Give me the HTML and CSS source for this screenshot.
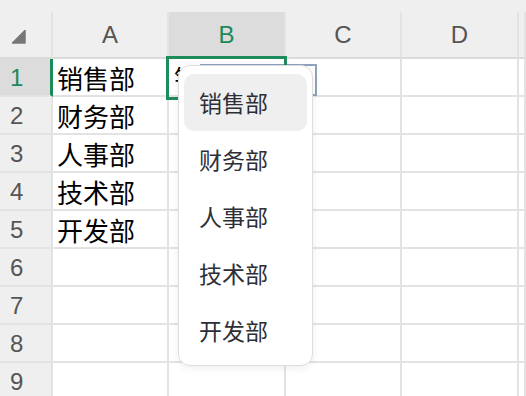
FILE: index.html
```html
<!DOCTYPE html>
<html lang="zh-CN">
<head>
  <meta charset="UTF-8">
  <title>Sheet</title>
  <link rel="stylesheet" href="styles.css">
</head>
<body>
  <div class="sheet">
    <div class="top-band"></div>

    <div class="row head">
      <div class="corner">
        <svg width="16" height="16" viewBox="0 0 16 16"><path d="M14 1.5 L14 14 L1.5 14 Z" fill="#777" stroke="#777" stroke-width="1.5" stroke-linejoin="round"/></svg>
      </div>
      <div class="col a">A</div>
      <div class="col b active">B</div>
      <div class="col c">C</div>
      <div class="col d">D</div>
      <div class="col e"></div>
    </div>

    <div class="row">
      <div class="rh active">1</div>
      <div class="cell a">销售部</div>
      <div class="cell b">销售部</div>
      <div class="cell c"></div>
      <div class="cell d"></div>
      <div class="cell e"></div>
    </div>
    <div class="row">
      <div class="rh">2</div>
      <div class="cell a">财务部</div>
      <div class="cell b"></div><div class="cell c"></div><div class="cell d"></div><div class="cell e"></div>
    </div>
    <div class="row">
      <div class="rh">3</div>
      <div class="cell a">人事部</div>
      <div class="cell b"></div><div class="cell c"></div><div class="cell d"></div><div class="cell e"></div>
    </div>
    <div class="row">
      <div class="rh">4</div>
      <div class="cell a">技术部</div>
      <div class="cell b"></div><div class="cell c"></div><div class="cell d"></div><div class="cell e"></div>
    </div>
    <div class="row">
      <div class="rh">5</div>
      <div class="cell a">开发部</div>
      <div class="cell b"></div><div class="cell c"></div><div class="cell d"></div><div class="cell e"></div>
    </div>
    <div class="row">
      <div class="rh">6</div>
      <div class="cell a"></div><div class="cell b"></div><div class="cell c"></div><div class="cell d"></div><div class="cell e"></div>
    </div>
    <div class="row">
      <div class="rh">7</div>
      <div class="cell a"></div><div class="cell b"></div><div class="cell c"></div><div class="cell d"></div><div class="cell e"></div>
    </div>
    <div class="row">
      <div class="rh">8</div>
      <div class="cell a"></div><div class="cell b"></div><div class="cell c"></div><div class="cell d"></div><div class="cell e"></div>
    </div>
    <div class="row">
      <div class="rh">9</div>
      <div class="cell a"></div><div class="cell b"></div><div class="cell c"></div><div class="cell d"></div><div class="cell e"></div>
    </div>

    <!-- editor + selection over B1 -->
    <div class="editor"></div>
    <div class="selection"></div>

    <div class="dropdown">
      <div class="option selected">销售部</div>
      <div class="option">财务部</div>
      <div class="option">人事部</div>
      <div class="option">技术部</div>
      <div class="option">开发部</div>
    </div>
  </div>
</body>
</html>
```

FILE: styles.css
```css
* {
  box-sizing: border-box;
}

html, body {
  margin: 0;
  height: 100%;
  overflow: hidden;
  background: #fff;
}

.sheet {
  position: relative;
  font-family: "Liberation Sans", Arial, sans-serif;
}

.top-band {
  height: 12px;
  background: #efefef;
}

.row {
  display: flex;
  height: 38px;
}

.row.head {
  height: 47px;
}

.row > div {
  border-right: 2px solid #e3e3e3;
  border-bottom: 2px solid #e3e3e3;
  flex-shrink: 0;
}

.corner, .rh {
  width: 53px;
  background: #efefef;
}

.a { width: 116px; }
.b { width: 117px; }
.c { width: 116px; }
.d { width: 117px; }
.e { flex: 1; }

.corner {
  display: flex;
  align-items: flex-end;
  padding: 0 0 12px 11px;
  border-bottom-color: #dadada !important;
}

.col {
  background: #efefef;
  color: #555;
  font-size: 24px;
  text-align: center;
  line-height: 45px;
  border-bottom-color: #dadada !important;
}

.col.active {
  background: #dcdcdc;
  color: #1b8a5a;
}

.rh {
  color: #555;
  font-size: 24px;
  line-height: 37px;
  padding-left: 10px;
}

.rh.active {
  background: #dcdcdc;
  color: #1b8a5a;
  border-right: 3px solid #1b8a5a;
}

.cell {
  font-family: "Noto Sans CJK SC", sans-serif;
  font-size: 26px;
  color: #000;
  line-height: 38px;
  padding-left: 4px;
  white-space: nowrap;
  overflow: hidden;
}

.cell.b {
  padding-left: 5px;
}

.editor {
  position: absolute;
  left: 200px;
  top: 64px;
  width: 117px;
  height: 32px;
  border: 2px solid #8da2bf;
}

.selection {
  position: absolute;
  left: 166px;
  top: 56px;
  width: 121px;
  height: 44px;
  border: 3px solid #1e8b5d;
}

.dropdown {
  position: absolute;
  left: 178px;
  top: 65px;
  width: 135px;
  height: 301px;
  padding: 8px 5px;
  background: #fff;
  border: 1px solid #dedede;
  border-radius: 12px;
  box-shadow: 0 2px 8px rgba(0, 0, 0, 0.07);
}

.option {
  height: 57px;
  line-height: 57px;
  padding-left: 15px;
  font-family: "Noto Sans CJK SC", sans-serif;
  font-size: 23px;
  color: #2e2f36;
  border-radius: 10px;
}

.option.selected {
  background: #efefef;
}
```
